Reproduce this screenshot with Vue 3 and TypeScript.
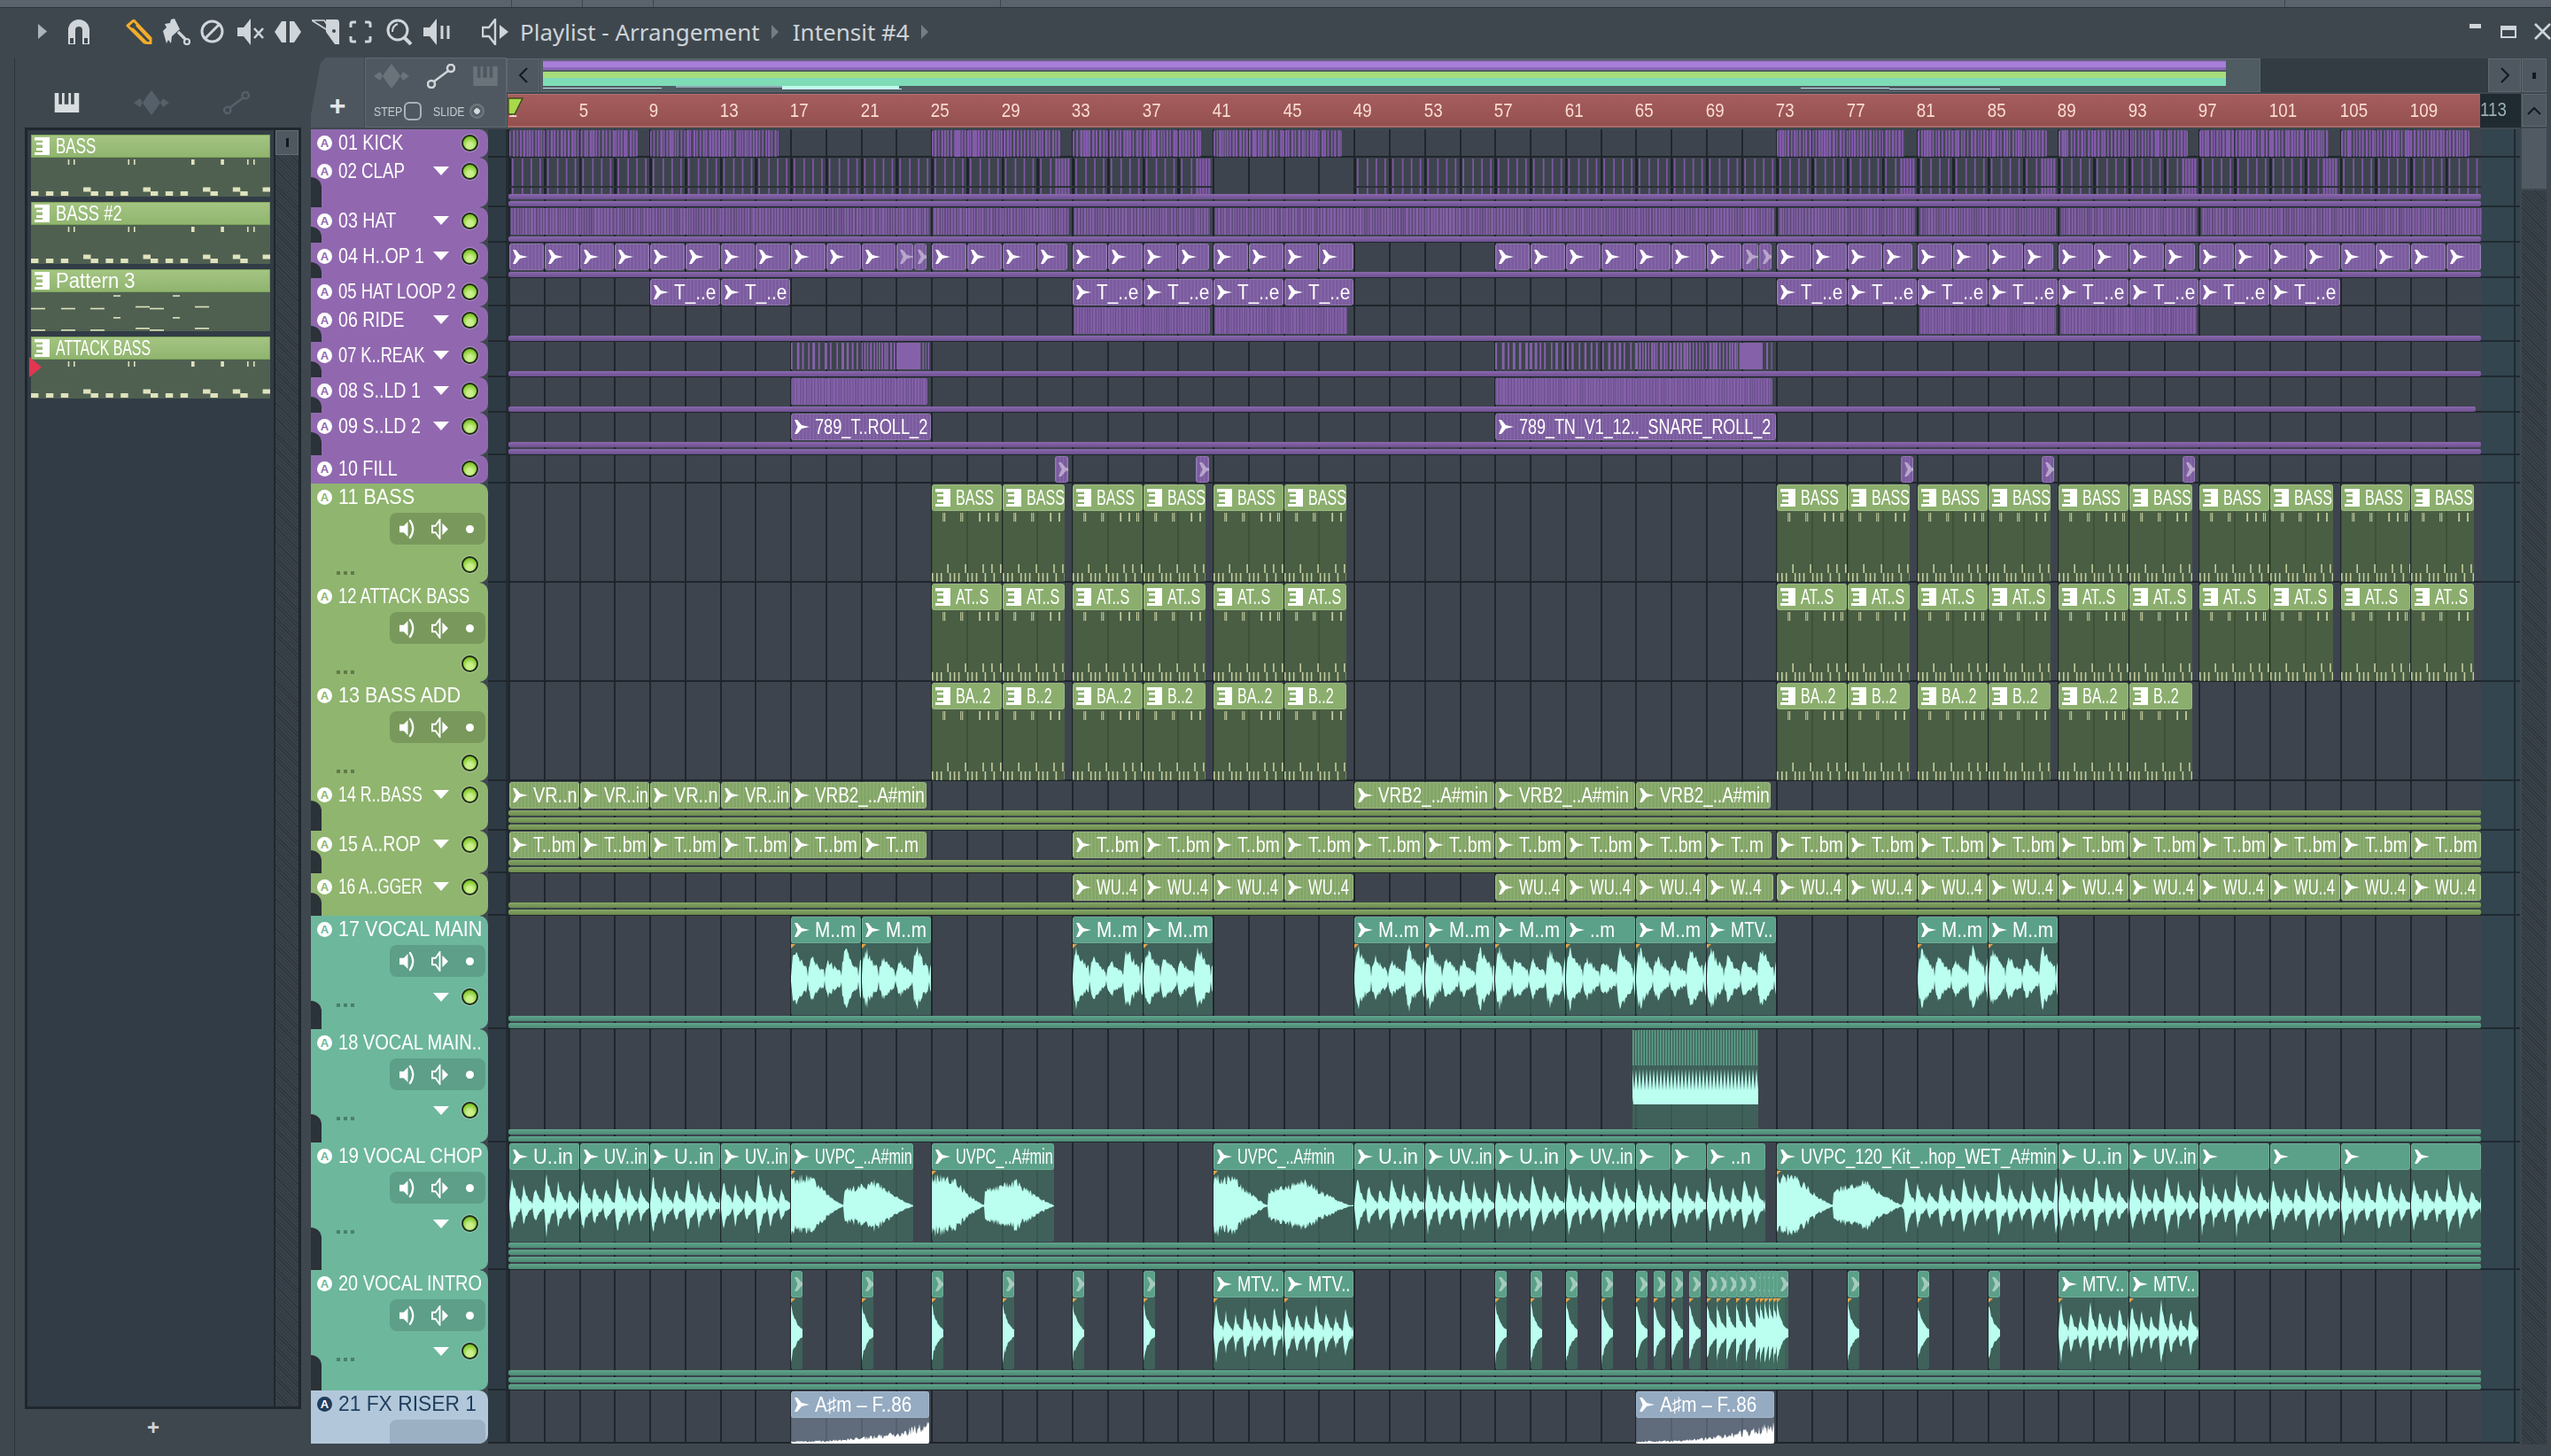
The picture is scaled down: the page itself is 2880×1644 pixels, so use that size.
<template>
  <div class="app">
    <svg class="defs" width="0" height="0">
      <symbol id="ico-audio" viewBox="0 0 17 16">
        <path d="M0 0 L3 0 L8 6 L17 8 L8 10 L3 16 L0 16 L3.5 8 Z" fill="#fff" />
      </symbol>
      <symbol id="ico-pat" viewBox="0 0 17 20">
        <path d="M0 0 H17 V20 H0 V17 H9 V15 H2 V12 H9 V8.5 H2 V6 H9 V3.5 H0 Z" fill="#fff" />
      </symbol>
      <symbol id="ico-wave" viewBox="0 0 40 28">
        <path d="M0 14 L7 9 L10 14 L14 8 L20 0 L26 8 L30 14 L33 9 L40 14 L33 19 L30 14 L26 20 L20 28 L14 20 L10 14 L7 19 Z" fill="currentColor" />
      </symbol>
      <symbol id="ico-line" viewBox="0 0 32 28">
        <circle cx="5" cy="23" r="4" fill="none" stroke="currentColor" stroke-width="2.6" />
        <circle cx="27" cy="5" r="4" fill="none" stroke="currentColor" stroke-width="2.6" />
        <path d="M8 20 L24 8" stroke="currentColor" stroke-width="2.6" />
      </symbol>
      <symbol id="ico-keys" viewBox="0 0 30 24">
        <path d="M0 0 H5 V14 H9 V0 H12 V14 H17 V0 H20 V14 H24 V0 H30 V24 H0 Z" fill="currentColor" />
      </symbol>
      <symbol id="ico-send" viewBox="0 0 20 24">
        <path d="M0 8 H5 L10 3 V21 L5 16 H0 Z" fill="#fff" />
        <path d="M12 1 Q20 12 12 23" fill="none" stroke="#fff" stroke-width="2.4" />
      </symbol>
      <symbol id="ico-spk" viewBox="0 0 20 24">
        <path d="M10 1 V23 L5 16 H1 V8 H5 Z" fill="none" stroke="#fff" stroke-width="2" />
        <path d="M13 5 L20 12 L13 19 Z" fill="#fff" />
      </symbol>
    </svg>

    <div class="topstrip">
      <i class="tick tick-a"></i><i class="tick tick-b"></i><i class="tick tick-c"></i><i class="tick tick-d"></i><i class="tick tick-e"></i>
    </div>

    <header class="toolbar">
      <svg class="ic-play" width="10" height="17" viewBox="0 0 10 17"><path d="M0 0 L10 8.5 L0 17 Z" fill="#aeb5ba" /></svg>
      <svg class="ic-magnet" width="26" height="28" viewBox="0 0 26 28">
        <path d="M1 28 V12 a12 12 0 0 1 24 0 V28 H17 V12 a4 4 0 0 0 -8 0 V28 Z" fill="#cfd5d9" />
        <path d="M3 21 H7 V27 H3 Z M19 21 H23 V27 H19 Z" fill="#3f474e" />
      </svg>
      <div class="tools">
        <span class="tool"><svg width="30" height="28" viewBox="0 0 30 28">
          <path d="M2 7 L9 1 L28 21 L28 27 L21 26 Z M7 10 L23 26 M12 6 L27 22" fill="none" stroke="#f2ad2b" stroke-width="3" stroke-linejoin="round" />
        </svg></span>
        <span class="tool"><svg width="31" height="30" viewBox="0 0 31 30">
          <path d="M0 14 L4 10 L2 6 L8 5 L9 1 L13 0 L19 12 L10 20 L9 28 L6 24 L4 28 Z" fill="#cfd5d9" />
          <path d="M17 15 L26 24" stroke="#cfd5d9" stroke-width="3.4" />
          <circle cx="27" cy="26" r="3" fill="none" stroke="#cfd5d9" stroke-width="2.2" />
        </svg></span>
        <span class="tool"><svg width="27" height="27" viewBox="0 0 27 27">
          <circle cx="13.5" cy="13.5" r="11.5" fill="none" stroke="#cfd5d9" stroke-width="3" />
          <path d="M6 21 L21 6" stroke="#cfd5d9" stroke-width="3" />
        </svg></span>
        <span class="tool"><svg width="30" height="30" viewBox="0 0 30 30">
          <path d="M15 0 V30 L7 20 H0 V10 H7 Z" fill="#cfd5d9" />
          <path d="M19 11 L29 22 M29 11 L19 22" stroke="#cfd5d9" stroke-width="2.6" />
        </svg></span>
        <span class="tool"><svg width="30" height="26" viewBox="0 0 30 26">
          <path d="M0 13 L8 1 L13 1 L13 25 L8 25 Z M30 13 L22 1 L17 1 L17 25 L22 25 Z" fill="#cfd5d9" />
        </svg></span>
        <span class="tool"><svg width="31" height="28" viewBox="0 0 31 28">
          <path d="M0 1 L14 1 L24 16 Z" fill="none" stroke="#cfd5d9" stroke-width="1.6" />
          <path d="M16 0 H28 Q31 0 31 4 V28 H26 L16 14 Z" fill="#cfd5d9" />
          <circle cx="25" cy="13" r="2" fill="#3f474e" />
        </svg></span>
        <span class="tool"><svg width="26" height="26" viewBox="0 0 26 26">
          <path d="M2 8 V4 Q2 2 4 2 H8 M18 2 H22 Q24 2 24 4 V8 M24 18 V22 Q24 24 22 24 H18 M8 24 H4 Q2 24 2 22 V18" fill="none" stroke="#cfd5d9" stroke-width="3" />
        </svg></span>
        <span class="tool"><svg width="30" height="30" viewBox="0 0 30 30">
          <circle cx="13" cy="13" r="11" fill="none" stroke="#cfd5d9" stroke-width="3" />
          <path d="M20 21 L28 29" stroke="#cfd5d9" stroke-width="4" />
          <path d="M7 15 Q7 8 13 6" fill="none" stroke="#cfd5d9" stroke-width="2" />
        </svg></span>
        <span class="tool"><svg width="30" height="30" viewBox="0 0 30 30">
          <path d="M15 0 V30 L7 20 H0 V10 H7 Z" fill="#cfd5d9" />
          <path d="M21 8 V23 M28 8 V23" stroke="#cfd5d9" stroke-width="3" />
        </svg></span>
      </div>
      <svg class="ic-title" width="30" height="30" viewBox="0 0 30 30">
        <path d="M15 1 V29 L8 20 H1 V10 H8 Z" fill="none" stroke="#cfd5d9" stroke-width="2.4" />
        <path d="M20 7 L30 15 L20 23 Z" fill="#cfd5d9" />
      </svg>
      <span class="title">Playlist - Arrangement</span>
      <i class="crumb"></i>
      <span class="title">Intensit #4</span>
      <i class="crumb"></i>
      <div class="winbtns">
        <i class="win-min"></i>
        <i class="win-max"></i>
        <svg width="19" height="19" viewBox="0 0 19 19"><path d="M1 1 L18 18 M18 1 L1 18" stroke="#cfd5d9" stroke-width="2.6" /></svg>
      </div>
    </header>

    <div class="body">
      <aside class="side">
        <div class="side-tabs">
          <svg class="tab-keys" width="31" height="22"><use href="#ico-keys" /></svg>
          <svg class="tab-dim" width="40" height="28"><use href="#ico-wave" /></svg>
          <svg class="tab-dim" width="32" height="26"><use href="#ico-line" /></svg>
        </div>
        <div class="picker">
          <div class="picker-list">
            <div v-for="p in patterns" :key="p.name" class="pat">
              <div class="pat-head">
                <svg width="17" height="20"><use href="#ico-pat" /></svg>
                <span class="squeeze" :style="{ '--sx': p.sx }">{{ p.name }}</span>
              </div>
              <svg class="pat-body" width="270" height="44" viewBox="0 0 270 44">
                <rect v-for="(n, i) in p.notes" :key="i" :x="n.x" :y="n.y" :width="n.w" :height="n.h" fill="#dfe2bd" />
              </svg>
              <i v-if="p.play" class="play-mark"></i>
            </div>
          </div>
          <div class="picker-scroll"><div class="picker-thumb"><i></i></div></div>
        </div>
        <div class="side-foot">+</div>
      </aside>

      <section class="playlist">
        <div class="pl-main">
          <div class="pl-head">
            <div class="add-tab"><span>+</span></div>
            <div class="mode-panel">
              <div class="mode-icons">
                <svg class="dim" width="40" height="28"><use href="#ico-wave" /></svg>
                <svg class="lit" width="32" height="28"><use href="#ico-line" /></svg>
                <svg class="dim" width="30" height="22"><use href="#ico-keys" /></svg>
              </div>
              <div class="mode-row">
                <span class="mode-txt">STEP</span><i class="chk"></i>
                <span class="mode-txt">SLIDE</span><i class="radio"></i>
              </div>
            </div>
            <div class="pl-head-right">
              <div class="ov-row">
                <div class="nav-btn"><svg width="12" height="18" viewBox="0 0 12 18"><path d="M10 1 L2 9 L10 17" fill="none" stroke="#12191e" stroke-width="2" /></svg></div>
                <div class="overview">
                  <svg width="1900" height="36" viewBox="0 0 1900 36">
                    <rect x="0" y="1" width="1900" height="10" fill="#a77fd8" />
                    <rect x="0" y="0" width="1900" height="2" fill="#8a6bb0" opacity=".6" />
                    <rect x="0" y="8" width="1900" height="3" fill="#8c68b8" />
                    <rect x="0" y="13" width="1900" height="7" fill="#a8dc7c" />
                    <rect x="0" y="20" width="1900" height="9" fill="#7edcb6" />
                    <rect x="0" y="31" width="134" height="1" fill="#c8e4f2" />
                    <rect x="150" y="29" width="120" height="2" fill="#8fa9b2" />
                    <rect x="270" y="29" width="132" height="3" fill="#bdfbe9" />
                    <rect x="270" y="32" width="135" height="1" fill="#c8e4f2" />
                    <rect x="1420" y="31" width="100" height="1" fill="#c8e4f2" />
                    <rect x="1520" y="32" width="125" height="1" fill="#c8e4f2" />
                  </svg>
                </div>
                <div class="ov-fill"></div>
                <div class="nav-btn"><svg width="12" height="18" viewBox="0 0 12 18"><path d="M2 1 L10 9 L2 17" fill="none" stroke="#12191e" stroke-width="2" /></svg></div>
              </div>
              <div class="ruler-row">
                <div class="ruler">
                  <span v-for="b in barNumbers" :key="b" class="bar-no" :style="{ left: barX(b) + 'px' }">{{ b }}</span>
                  <svg class="playhead" width="18" height="20" viewBox="0 0 18 20"><path d="M1 1 H17 L8 19 L1 19 Z" fill="#a9d94a" stroke="#3c4a22" stroke-width="1.4" /></svg>
                </div>
                <div class="ruler-end"><span class="bar-end">113</span></div>
              </div>
            </div>
          </div>

          <div v-for="t in tracks" :key="t.name" class="row" :class="'tone-' + t.tone" :style="{ height: t.h + 'px' }">
            <div class="head">
              <div class="head-top">
                <b class="badge">A</b>
                <span class="head-name" :style="{ '--sx': t.sx }">{{ t.name }}</span>
                <template v-if="!t.tall">
                  <i v-if="t.strips" class="tri"></i>
                  <i class="led"></i>
                </template>
              </div>
              <template v-if="t.tall">
                <div class="pill">
                  <template v-if="t.h > 60">
                    <svg width="19" height="23"><use href="#ico-send" /></svg>
                    <svg width="19" height="23"><use href="#ico-spk" /></svg>
                    <i class="pill-dot"></i>
                  </template>
                </div>
                <div class="head-ctl">
                  <span class="dots"><i></i><i></i><i></i></span>
                  <i v-if="t.strips" class="tri"></i>
                  <i class="led"></i>
                </div>
              </template>
              <i v-if="t.strips" class="notch" :class="{ 'notch-tall': t.tall }"></i>
            </div>
            <div class="gutter"></div>
            <div class="lane">
              <div
                v-for="(c, i) in t.clips"
                :key="i"
                class="clip"
                :class="c.cls"
                :style="{ left: c.x + 'px', width: c.w + 'px', height: c.h + 'px' }"
              >
                <svg v-if="c.paths.length" class="clip-art" :width="c.w" :height="c.h">
                  <path v-for="(p, j) in c.paths" :key="j" :d="p.d" :fill="p.fill" :transform="`translate(0 ${p.y})`" />
                </svg>
                <div v-if="c.head" class="clip-head" :class="{ faded: c.faded }">
                  <svg v-if="c.head === 'audio'" class="ic-a" width="17" height="16"><use href="#ico-audio" /></svg>
                  <svg v-else class="ic-p" width="17" height="20"><use href="#ico-pat" /></svg>
                  <span v-if="c.label" class="squeeze" :style="{ '--sx': c.sx }">{{ c.label }}</span>
                </div>
                <i v-if="c.mark" class="mark"></i>
              </div>
              <div v-for="s in t.strips" :key="s" class="strip" :class="{ 'strip-short': t.name === '08 S..LD 1' }"></div>
            </div>
            <div class="tail"></div>
          </div>
        </div>

        <div class="vscroll">
          <div class="vbtn vbtn-top"><i></i></div>
          <div class="vbtn vbtn-up"><svg width="16" height="10" viewBox="0 0 16 10"><path d="M1 9 L8 2 L15 9" fill="none" stroke="#12191e" stroke-width="2" /></svg></div>
          <div class="vthumb"></div>
          <div class="vtrack"></div>
        </div>
      </section>
    </div>
  </div>
</template>

<script setup lang="ts">
interface ArtPath { d: string; fill: string; y: number }
interface Clip {
  x: number
  w: number
  h: number
  cls: string
  head?: 'audio' | 'pat'
  label?: string
  sx?: number
  faded?: boolean
  mark?: boolean
  paths: ArtPath[]
}
interface Track { name: string; tone: string; h: number; strips: number; tall: boolean; sx?: number; clips: Clip[] }

const BAR = 19.88
const barX = (b: number) => (b - 1) * BAR

const barNumbers: number[] = []
for (let b = 1; b <= 109; b += 4) barNumbers.push(b)

function rng(seed: number) {
  let s = seed * 7919 + 17
  return () => {
    s = (s * 16807) % 2147483647
    return s / 2147483647
  }
}

// horizontal squeeze per label, so the text takes the width it has in the clip
const LABEL_SX: Record<string, number> = {
  'VR..n': 0.86,
  'VR..in': 0.8,
  'U..in': 0.95,
  'UV..in': 0.8,
  'T..bm': 0.85,
  'T..m': 0.85,
  'WU..4': 0.72,
  'W..4': 0.75,
  'T_..e': 0.9,
  'M..m': 0.9,
  'MTV..': 0.8,
  'VRB2_..A#min': 0.82,
  'UVPC_..A#min': 0.71,
  '789_T..ROLL_2': 0.79,
  '789_TN_V1_12.._SNARE_ROLL_2': 0.78,
  'UVPC_120_Kit_..hop_WET_A#min': 0.8,
}

// notes of the bass pattern, picker scale (270px = 32 steps)
const step = 270 / 32
const bassNotes: { x: number; y: number; w: number; h: number }[] = []
;[41.7, 48, 109.5, 116, 244, 251].forEach((x) => bassNotes.push({ x, y: 2, w: 1.6, h: 6 }))
;[181, 214.3].forEach((x) => bassNotes.push({ x, y: 2, w: 3.6, h: 6 }))
;[0, 2, 4, 8, 10, 12, 16, 18, 20, 24, 28].forEach((s) => bassNotes.push({ x: s * step, y: 38, w: step, h: 5 }))
;[7, 15, 23, 27, 31].forEach((s) => bassNotes.push({ x: s * step, y: 33.5, w: step, h: 5 }))

const dashNotes: { x: number; y: number; w: number; h: number }[] = []
const dash = (x: number, w: number, y: number) => dashNotes.push({ x, y, w, h: 1.6 })
;[0, 34, 67].forEach((x) => { dash(x, 16, 17.7); dash(x, 16, 42) })
;[93, 160].forEach((x) => { dash(x, 8, 3.3); dash(x, 8, 28) })
dash(118, 16, 15.7); dash(134, 16, 17.7); dash(185, 16, 15.7)
dash(118, 16, 40); dash(134, 16, 42); dash(185, 16, 40)

const patterns = [
  { name: 'BASS', notes: bassNotes, play: false, sx: 0.74 },
  { name: 'BASS #2', notes: bassNotes, play: false, sx: 0.8 },
  { name: 'Pattern 3', notes: dashNotes, play: false, sx: 0.96 },
  { name: 'ATTACK BASS', notes: bassNotes, play: true, sx: 0.69 },
]

// vertical line stripes, for the drum clips
function stripes(w: number, h: number, period: number, width: number, seed: number, y0 = 0) {
  const r = rng(seed)
  let d = ''
  let x = 0
  while (x < w) {
    const bw = width * (0.7 + r() * 0.7)
    d += `M${x.toFixed(1)} ${y0}h${bw.toFixed(1)}v${h}h${(-bw).toFixed(1)}z`
    x += period * (0.75 + r() * 0.5)
  }
  return d
}

const BURST = [0.95, 0.7, 0.6, 1, 0.75, 0.55, 0.85, 0.65]

function chopAmp(x: number, period: number, full = 1) {
  const i = Math.floor(x / period)
  const u = (x % period) / period
  const env = u < 0.25 ? u / 0.25 : Math.exp(-(u - 0.25) * 3.2)
  return Math.min(1, BURST[i % 8] * (0.1 + 0.9 * Math.pow(env, full)) * 1.05)
}

function swellAmp(x: number, s1: number, s2: number) {
  if (x < s1) return x < 22 ? 0.92 : 0.02 + 0.9 * Math.pow(1 - (x - 22) / (s1 - 22), 1.3)
  const u = Math.min(1, (x - s1) / s2)
  if (u < 0.45) return 0.5 + (0.28 * u) / 0.45
  return 0.02 + 0.76 * Math.pow(1 - (u - 0.45) / 0.55, 1.2)
}

function wave(w: number, h: number, amp: (x: number) => number, seed: number, rough = 0.35) {
  const r = rng(seed)
  const mid = h / 2
  const top: string[] = []
  const bot: string[] = []
  for (let x = 0; x <= w; x += 1) {
    const a = amp(x)
    const v = (1 - rough + rough * r()) * a * mid
    top.push(`${x} ${(mid - v).toFixed(1)}`)
    bot.unshift(`${x} ${(mid + v * (0.85 + r() * 0.15)).toFixed(1)}`)
  }
  return 'M' + top.concat(bot).join('L') + 'Z'
}

function riser(w: number, h: number, seed: number) {
  const r = rng(seed)
  let d = `M0 ${h}`
  for (let x = 0; x <= w; x += 1) {
    const a = (0.12 + 0.88 * Math.pow(x / w, 2.4)) * (0.45 + r() * 0.55)
    d += `L${x} ${(h - a * h).toFixed(1)}`
  }
  return d + `L${w} ${h}Z`
}

const clipAt = (bar: number, len: number, h: number, cls: string, extra: Partial<Clip> = {}): Clip => ({
  x: barX(bar) + 1,
  w: len * BAR - 1,
  h,
  cls,
  paths: [],
  sx: extra.label ? LABEL_SX[extra.label] ?? 0.88 : undefined,
  ...extra,
})

// drum rows
function lineClip(bar: number, len: number, h: number, cls: string, period: number, width: number, fill: string, seed: number) {
  const w = len * BAR
  return clipAt(bar, len, h, cls, { paths: [{ d: stripes(w, h, period, width, seed), fill, y: 0 }] })
}

function label(bar: number, len: number, text: string | undefined, cls = 'clip-tex', faded = false) {
  return clipAt(bar, len, 30, cls, { head: 'audio', label: text, faded })
}

function each(start: number, n: number, stepBars: number, make: (bar: number, i: number) => Clip) {
  const out: Clip[] = []
  for (let i = 0; i < n; i++) out.push(make(start + i * stepBars, i))
  return out
}

function clapRange(from: number, to: number) {
  const w = (to - from) * BAR
  let d = ''
  let grid = ''
  for (let b = from; b < to; b += 2) {
    const x0 = (b - from) * BAR
    ;[3, 14, 24, 34].forEach((o) => {
      if (x0 + o < w) {
        d += `M${(x0 + o).toFixed(1)} 0h1.7v31h-1.7zM${(x0 + o).toFixed(1)} 33h1.7v7h-1.7z`
      }
    })
    grid += `M${x0.toFixed(1)} 0h2v40h-2z`
  }
  ;[32, 40, 80, 88, 96, 104].forEach((b) => {
    if (b >= from && b < to) {
      const x0 = (b - from) * BAR
      for (let k = 0; k < 5; k++) d += `M${(x0 + k * 3.4).toFixed(1)} 0h2.6v31h-2.6zM${(x0 + k * 3.4).toFixed(1)} 33h2.6v7h-2.6z`
    }
  })
  return clipAt(from, to - from, 40, 'clip-bare', {
    paths: [
      { d: grid, fill: '#1c2329', y: 0 },
      { d, fill: '#7f58a5', y: 0 },
      { d: `M0 31h${w.toFixed(0)}v2h-${w.toFixed(0)}z`, fill: '#2a3137', y: 0 },
    ],
  })
}

// two-speed roll used on track 07
function rollClip(bar: number, parts: [number, number, number][], seed: number) {
  const total = parts.reduce((a, p) => a + p[0], 0)
  const h = 30
  let d = ''
  let offs = 0
  parts.forEach((p, i) => {
    const w = p[0] * BAR
    if (p[1] === 0) {
      d += `M${offs.toFixed(1)} 0h${w.toFixed(1)}v${h}h-${w.toFixed(1)}z`
    } else {
      const sub = stripes(w, h, p[1], p[2], seed + i)
      d += sub.replace(/M([\d.]+) /g, (_, v) => `M${(parseFloat(v) + offs).toFixed(1)} `)
    }
    offs += w
  })
  return clipAt(bar, total, h, 'clip-bare', { paths: [{ d, fill: '#8561a9', y: 0 }] })
}

const KICK_STARTS = [1, 9, 25, 33, 41, 73, 81, 89, 97, 105]
const hatRanges: [number, number][] = [[1, 23.9], [25, 7.8], [33, 7.8], [41, 31.8], [73, 7.8], [81, 7.8], [89, 7.8], [97, 16]]

const hop = (start: number, n: number, lastLen = 2) =>
  each(start, n, 2, (b, i) => label(b, i === n - 1 ? lastLen : 2, undefined))

const t4Clips: Clip[] = [
  ...hop(1, 11),
  label(23, 1, undefined, 'clip-tex', true),
  label(24, 0.72, undefined, 'clip-tex', true),
  ...hop(25, 4, 1.75),
  ...hop(33, 4, 1.8),
  ...hop(41, 4, 2),
  ...hop(57, 7),
  label(71, 1, undefined, 'clip-tex', true),
  label(72, 0.72, undefined, 'clip-tex', true),
  ...hop(73, 4, 1.75),
  ...hop(81, 4, 1.75),
  ...hop(89, 4, 1.75),
  ...hop(97, 8),
]

const T5_STARTS = [9, 13, 33, 37, 41, 45, 73, 77, 81, 85, 89, 93, 97, 101]

function patClip(bar: number, len: number, text: string) {
  const sc = (4 * BAR) / 270
  let d = ''
  bassNotes.forEach((n) => {
    const isTick = n.y < 10
    const y = isTick ? 32 : n.y < 36 ? 90 : 100
    const nw = isTick ? (n.w > 2 ? 1.8 : 1.1) : 1.6
    d += `M${(n.x * sc).toFixed(1)} ${y}h${nw}v10h-${nw}z`
  })
  return clipAt(bar, len, 110, 'clip-pat', {
    head: 'pat',
    label: text,
    sx: 0.7,
    paths: [{ d, fill: '#c4cb9f', y: 0 }],
  })
}

const PAT_BARS = [25, 33, 41, 73, 81, 89, 97, 105]
const patRow = (names: [string, string], bars: number[]) =>
  bars.flatMap((b) => [patClip(b, 4, names[0]), patClip(b + 4, 3.6, names[1])])

const vrb = (b: number, len = 8) => label(b, len, 'VRB2_..A#min')

function audio(bar: number, len: number, text: string | undefined, bodyH: number, amp: (x: number) => number, seed: number, mark = true, rough = 0.35, faded = false) {
  const w = Math.round(len * BAR)
  return clipAt(bar, len, 30 + bodyH, 'clip-audio', {
    head: 'audio',
    label: text,
    mark,
    faded,
    paths: [{ d: wave(w, bodyH - 2, amp, seed, rough), fill: '#baffef', y: 31 }],
  })
}

// the main vocal is fuller than the chops
const mainAmp = (x: number) => chopAmp(x, 19, 0.5)
const chop13 = (x: number) => chopAmp(x, 13)
const t17 = (bar: number, text: string, seed: number) => audio(bar, 4, text, 81, mainAmp, seed)
const t19chop = (bar: number, text: string | undefined, seed: number, len = 4) => audio(bar, len, text, 81, chop13, seed, false)
const hitAmp = (w: number) => (x: number) => (x > w ? 0 : 0.92 * Math.exp(-x / (w * 0.42)) + 0.02)
const hit = (bar: number, w: number, seed: number) => {
  const px = Math.round(w)
  return clipAt(bar, px / BAR, 111, 'clip-audio', {
    head: 'audio',
    faded: true,
    mark: true,
    paths: [{ d: wave(px, 79, hitAmp(px), seed, 0.2), fill: '#baffef', y: 31 }],
  })
}

const HIT_BARS = [17, 21, 25, 29, 33, 37, 57, 59, 61, 63, 65, 66, 67, 68, 69, 69.55, 70.1, 70.65, 71.2, 71.75, 72.05, 72.3, 72.55, 72.8, 73, 77, 81, 85]

function comb18() {
  const w = 143
  let top = ''
  for (let x = 0; x < w; x += 3.1) top += `M${x.toFixed(1)} 0h1.6v40h-1.6z`
  let d = 'M0 76'
  for (let x = 0; x <= w; x += 2) {
    d += `L${x} ${x % 4 === 0 ? 44 : 68}`
  }
  for (let x = w; x >= 0; x -= 2) {
    d += `L${x} ${x % 4 === 0 ? 108 : 84}`
  }
  return clipAt(64.8, 7.2, 111, 'clip-bare clip-darkteal', {
    paths: [
      { d: top, fill: '#5fa28b', y: 0 },
      { d: d + 'Z', fill: '#baffef', y: 0 },
    ],
  })
}

const fxClip = (bar: number, seed: number) =>
  clipAt(bar, 7.9, 59, 'clip-audio clip-fx', {
    head: 'audio',
    label: 'A♯m – F..86',
    sx: 0.9,
    paths: [{ d: riser(Math.round(7.9 * BAR), 27, seed), fill: '#fff', y: 32 }],
  })

const tracks: Track[] = [
  {
    name: '01 KICK', tone: 'purple', h: 32, strips: 0, tall: false,
    clips: KICK_STARTS.map((b, i) => lineClip(b, 7.35, 30, 'clip-dim', 3.5, 2, '#835bab', i + 1)),
  },
  {
    name: '02 CLAP', tone: 'purple', h: 56, strips: 2, tall: false, sx: 0.78,
    clips: [clapRange(1, 41), clapRange(49, 113)],
  },
  {
    name: '03 HAT', tone: 'purple', h: 40, strips: 1, tall: false,
    clips: hatRanges.map(([b, l], i) => lineClip(b + 0.06, l, 30, 'clip-fill', 3.2, 1.4, '#5d4b78', i + 20)),
  },
  { name: '04 H..OP 1', tone: 'purple', h: 40, strips: 1, tall: false, clips: t4Clips },
  { name: '05 HAT LOOP 2', tone: 'purple', h: 32, strips: 0, tall: false, sx: 0.77, clips: T5_STARTS.map((b) => label(b, 4, 'T_..e')) },
  {
    name: '06 RIDE', tone: 'purple', h: 40, strips: 1, tall: false,
    clips: [[33, 7.8], [41, 7.6], [81, 7.8], [89, 7.8]].map(([b, l], i) => lineClip(b + 0.06, l, 30, 'clip-fill', 3.1, 1.3, '#684f8a', i + 40)),
  },
  {
    name: '07 K..REAK', tone: 'purple', h: 40, strips: 1, tall: false, sx: 0.76,
    clips: [
      rollClip(17, [[4, 6.4, 2.2], [2.1, 3.4, 1.9], [1.2, 0, 0], [0.6, 3.2, 1.4]], 50),
      rollClip(57, [[8, 6.4, 2.2], [5.9, 3.4, 2], [1.2, 0, 0], [0.7, 5, 1.6]], 55),
    ],
  },
  {
    name: '08 S..LD 1', tone: 'purple', h: 40, strips: 1, tall: false,
    clips: [lineClip(17, 7.8, 30, 'clip-fill', 3.2, 1.2, '#6a518d', 60), lineClip(57, 15.8, 30, 'clip-fill', 3.2, 1.2, '#6a518d', 61)],
  },
  {
    name: '09 S..LD 2', tone: 'purple', h: 48, strips: 2, tall: false,
    clips: [label(17, 8, '789_T..ROLL_2'), label(57, 16, '789_TN_V1_12.._SNARE_ROLL_2')],
  },
  {
    name: '10 FILL', tone: 'purple', h: 32, strips: 0, tall: false,
    clips: [32, 40, 80, 88, 96].map((b) => label(b, 0.8, undefined, 'clip-tex', true)),
  },
  { name: '11 BASS', tone: 'green', h: 112, strips: 0, tall: true, sx: 0.9, clips: patRow(['BASS', 'BASS'], PAT_BARS) },
  { name: '12 ATTACK BASS', tone: 'green', h: 112, strips: 0, tall: true, sx: 0.765, clips: patRow(['AT..S', 'AT..S'], PAT_BARS) },
  { name: '13 BASS ADD', tone: 'green', h: 112, strips: 0, tall: true, sx: 0.9, clips: patRow(['BA..2', 'B..2'], [25, 33, 41, 73, 81, 89]) },
  {
    name: '14 R..BASS', tone: 'green', h: 56, strips: 3, tall: false, sx: 0.74,
    clips: [
      label(1, 4, 'VR..n'), label(5, 4, 'VR..in'), label(9, 4, 'VR..n'), label(13, 4, 'VR..in'),
      vrb(17, 7.75), vrb(49), vrb(57), vrb(65, 7.7),
    ],
  },
  {
    name: '15 A..ROP', tone: 'green', h: 48, strips: 2, tall: false,
    clips: [
      ...each(1, 5, 4, (b) => label(b, 4, 'T..bm')),
      label(21, 3.75, 'T..m'),
      ...each(33, 9, 4, (b) => label(b, 4, 'T..bm')),
      label(69, 3.75, 'T..m'),
      ...each(73, 10, 4, (b) => label(b, 4, 'T..bm')),
    ],
  },
  {
    name: '16 A..GGER', tone: 'green', h: 48, strips: 2, tall: false, sx: 0.72,
    clips: [
      ...each(33, 4, 4, (b) => label(b, 4, 'WU..4')),
      ...each(57, 3, 4, (b) => label(b, 4, 'WU..4')),
      label(69, 3.85, 'W..4'),
      ...each(73, 10, 4, (b) => label(b, 4, 'WU..4')),
    ],
  },
  {
    name: '17 VOCAL MAIN', tone: 'teal', h: 128, strips: 2, tall: true, sx: 0.9,
    clips: [
      t17(17, 'M..m', 71), t17(21, 'M..m', 72), t17(33, 'M..m', 73), t17(37, 'M..m', 74),
      t17(49, 'M..m', 75), t17(53, 'M..m', 76), t17(57, 'M..m', 77), t17(61, '..m', 78),
      t17(65, 'M..m', 79), t17(69, 'MTV..', 80), t17(81, 'M..m', 81), t17(85, 'M..m', 82),
    ],
  },
  { name: '18 VOCAL MAIN..', tone: 'teal', h: 128, strips: 2, tall: true, sx: 0.835, clips: [comb18()] },
  {
    name: '19 VOCAL CHOP', tone: 'teal', h: 144, strips: 4, tall: true, sx: 0.857,
    clips: [
      t19chop(1, 'U..in', 91), t19chop(5, 'UV..in', 92), t19chop(9, 'U..in', 93), t19chop(13, 'UV..in', 94),
      audio(17, 7, 'UVPC_..A#min', 81, (x) => swellAmp(x, 60, 78), 95),
      audio(25, 7, 'UVPC_..A#min', 81, (x) => swellAmp(x, 60, 78), 96),
      audio(41, 8, 'UVPC_..A#min', 81, (x) => swellAmp(x, 62, 92), 97),
      t19chop(49, 'U..in', 98), t19chop(53, 'UV..in', 99), t19chop(57, 'U..in', 100), t19chop(61, 'UV..in', 101),
      t19chop(65, undefined, 102, 2), t19chop(67, undefined, 103, 2), t19chop(69, '..n', 104, 3.4),
      audio(73, 16, 'UVPC_120_Kit_..hop_WET_A#min', 81, (x) => (x < 142 ? swellAmp(x, 64, 78) : chop13(x)), 105),
      t19chop(89, 'U..in', 106), t19chop(93, 'UV..in', 107),
      t19chop(97, undefined, 108), t19chop(101, undefined, 109), t19chop(105, undefined, 110), t19chop(109, undefined, 111),
    ],
  },
  {
    name: '20 VOCAL INTRO', tone: 'teal', h: 136, strips: 3, tall: true, sx: 0.83,
    clips: [
      ...HIT_BARS.map((b, i) => hit(b, 14, 120 + i)),
      audio(41, 4, 'MTV..', 81, (x) => chopAmp(x, 11), 150),
      audio(45, 4, 'MTV..', 81, (x) => chopAmp(x, 11), 151),
      audio(89, 4, 'MTV..', 81, (x) => chopAmp(x, 11), 152),
      audio(93, 4, 'MTV..', 81, (x) => chopAmp(x, 11), 153),
    ],
  },
  { name: '21 FX RISER 1', tone: 'blue', h: 60, strips: 0, tall: true, sx: 0.95, clips: [fxClip(17, 170), fxClip(65, 171)] },
]
</script>

<style>
html, body { background: #3f474e; overflow: hidden; }
</style>

<style scoped>
.app {
  width: 2880px;
  height: 1644px;
  overflow: hidden;
  background: #3f474e;
  color: #fff;
  font-family: "Liberation Sans", sans-serif;
  display: flex;
  flex-direction: column;
}
.defs { position: absolute; }
i { display: block; font-style: normal; }

.topstrip {
  height: 8px;
  background: #5a636b;
  border-bottom: 1px solid #2c3339;
  position: relative;
  flex: none;
}
.tick { position: absolute; top: 0; width: 1px; height: 8px; background: #3e464d; }
.tick-a { left: 577px; }
.tick-b { left: 657px; }
.tick-c { left: 737px; }
.tick-d { left: 1129px; }
.tick-e { left: 2579px; }

.toolbar {
  height: 56px;
  flex: none;
  display: flex;
  align-items: center;
  padding-left: 43px;
  padding-bottom: 3px;
  box-sizing: border-box;
}
.ic-magnet { margin-left: 23px; }
.tools { display: flex; margin-left: 40px; }
.tool { width: 42px; display: flex; align-items: center; }
.ic-title { margin-left: 24px; }
.title {
  font-family: "Noto Sans", sans-serif;
  font-size: 26px;
  color: #cdd4d9;
  margin-left: 13px;
}
.crumb {
  width: 0;
  height: 0;
  border-left: 8px solid #757d83;
  border-top: 8px solid transparent;
  border-bottom: 8px solid transparent;
  margin-left: 13px;
}
.crumb + .title { margin-left: 16px; }
.winbtns { margin-left: auto; display: flex; align-items: center; }
.win-min { width: 13px; height: 5px; background: #cfd5d9; margin-right: 22px; margin-top: -12px; }
.win-max { width: 18px; height: 14px; border: 2px solid #cfd5d9; border-top-width: 5px; box-sizing: border-box; margin-right: 20px; }

.body { flex: 1; display: flex; min-height: 0; }

.squeeze {
  display: inline-block;
  flex: none;
  transform: scaleX(var(--sx, 0.82));
  transform-origin: 0 50%;
  width: 0;
  white-space: nowrap;
}

/* pattern picker */
.side {
  width: 335px;
  flex: none;
  box-sizing: border-box;
  border-left: 1px solid #2c3339;
  margin-left: 16px;
  padding-left: 11px;
  display: flex;
  flex-direction: column;
}
.side-tabs {
  height: 79px;
  flex: none;
  box-sizing: border-box;
  display: flex;
  align-items: center;
  padding: 22px 0 0 32px;
  gap: 60px;
  color: #d8dde0;
}
.tab-dim { color: #56606a; }
.picker {
  width: 312px;
  height: 1447px;
  flex: none;
  box-sizing: border-box;
  border: 3px solid #1f272d;
  background: #323c46;
  display: flex;
}
.picker-list { flex: 1; padding: 5px 4px; box-sizing: border-box; }
.pat { position: relative; width: 270px; height: 70px; margin-bottom: 6px; background: #4f6051; }
.pat-head {
  height: 26px;
  box-sizing: border-box;
  border: 1px solid #7da35a;
  background: linear-gradient(#a4c482, #90b56f);
  display: flex;
  align-items: center;
  padding-left: 3px;
  font-size: 23px;
  gap: 7px;
}
.pat-body { display: block; }
.play-mark {
  position: absolute;
  left: -2px;
  top: 23px;
  width: 14px;
  height: 23px;
  background: #e23652;
  clip-path: polygon(0 0, 100% 50%, 0 100%);
}
.picker-scroll {
  width: 29px;
  border-left: 2px solid #1f272d;
  background: repeating-linear-gradient(45deg, #2f363c 0 1px, #39414a 1px 3px);
}
.picker-thumb {
  height: 28px;
  background: #4f5860;
  border: 1px solid #646d74;
  box-sizing: border-box;
  display: flex;
  align-items: center;
  justify-content: center;
}
.picker-thumb i { width: 3px; height: 10px; background: #12191e; }
.side-foot {
  text-align: center;
  font-weight: 700;
  font-size: 24px;
  line-height: 42px;
  color: #cfd5d9;
  width: 290px;
}

/* playlist */
.playlist { flex: 1; display: flex; min-width: 0; }
.pl-main { width: 2495px; flex: none; }
.pl-head { height: 81px; display: flex; }
.add-tab {
  width: 60px;
  height: 79px;
  background: #4d565e;
  clip-path: polygon(0 100%, 0 82%, 18% 8%, 28% 0, 100% 0, 100% 100%);
  display: flex;
  align-items: flex-end;
  justify-content: center;
  font-weight: 700;
  font-size: 32px;
  line-height: 50px;
  color: #e4e8ea;
}
.mode-panel {
  width: 160px;
  height: 79px;
  margin-left: 1px;
  box-sizing: border-box;
  background: #4f5860;
  border: 1px solid #5f686f;
  font-size: 15px;
  color: #c4cbd0;
  padding: 6px 8px 0 9px;
}
.mode-icons { display: flex; justify-content: space-between; align-items: center; height: 28px; }
.dim { color: #6a737a; }
.lit { color: #cfd5d9; }
.mode-row { display: flex; align-items: center; margin-top: 15px; }
.mode-txt { display: inline-block; width: 32px; transform: scaleX(0.82); transform-origin: 0 50%; white-space: nowrap; }
.chk { width: 20px; height: 21px; border: 2px solid #aab2b7; border-radius: 6px; box-sizing: border-box; margin: 0 13px 0 2px; }
.radio {
  width: 17px;
  height: 17px;
  margin-left: 9px;
  border-radius: 50%;
  border: 2px solid #6f787f;
  box-sizing: border-box;
  background: radial-gradient(circle, #d2d8dc 0 3px, #59626a 3.5px);
}
.pl-head-right { flex: 1; min-width: 0; }
.ov-row { display: flex; height: 38px; margin-top: 1px; }
.nav-btn {
  width: 37px;
  flex: none;
  box-sizing: border-box;
  background: #4f5860;
  border: 1px solid #5f686f;
  display: flex;
  align-items: center;
  justify-content: center;
}
.overview {
  width: 1942px;
  flex: none;
  box-sizing: border-box;
  background: #4f5c62;
  border: 1px solid #5f686f;
  padding: 1px 1px 0 2px;
  margin-left: 1px;
}
.overview svg { display: block; }
.ov-fill { flex: 1; background: #333b43; }
.ruler-row { display: flex; height: 38px; margin-top: 2px; }
.ruler {
  position: relative;
  width: 2227px;
  margin-left: 1px;
  flex: none;
  background: linear-gradient(#a65d5e, #94504f);
  border-top: 1px solid #b07070;
  border-bottom: 2px solid #a86a68;
  box-sizing: border-box;
  overflow: hidden;
}
.bar-no, .bar-end {
  font-size: 22px;
  line-height: 36px;
  color: #fbdcd2;
  display: inline-block;
  transform: scaleX(0.85);
  transform-origin: 0 50%;
  white-space: nowrap;
}
.bar-no { position: absolute; top: 0; padding-left: 1px; }
.playhead { position: absolute; left: 0; top: 3px; }
.ruler-end { flex: 1; background: #1f2a31; overflow: hidden; }
.bar-end { color: #9db0b8; }

.row { display: flex; overflow: hidden; }
.tone-purple { --head: #9168af; --c-head: #8261a6; --strip-a: #8a69ad; --strip-b: #6e5091; --txt: #fff; --pill: #7f5a9a; }
.tone-green { --head: #90b56f; --c-head: #8bae6e; --c-body: rgba(82, 112, 62, 0.6); --strip-a: #86a765; --strip-b: #6b8a4f; --txt: #fff; --pill: #79995c; }
.tone-teal { --head: #6db79d; --c-head: #5ba088; --c-body: rgba(64, 110, 96, 0.7); --strip-a: #5fa58c; --strip-b: #4c8873; --txt: #fff; --pill: #5d9f88; }
.tone-blue { --head: #b2c8da; --c-head: #95abc1; --c-body: rgba(120, 135, 155, 0.6); --strip-a: #95abc1; --strip-b: #7d92a7; --txt: #1f3d5c; --pill: #9bb0c3; }

.head {
  position: relative;
  width: 200px;
  flex: none;
  box-sizing: border-box;
  background: var(--head);
  border-radius: 0 10px 10px 0;
  color: var(--txt);
  overflow: hidden;
}
.head-top {
  height: 30px;
  display: flex;
  align-items: center;
  padding: 0 11px 0 7px;
}
.badge {
  width: 17px;
  height: 17px;
  flex: none;
  border-radius: 50%;
  background: #fff;
  color: var(--head);
  font: 700 13px/17px "Liberation Sans", sans-serif;
  text-align: center;
}
.tone-blue .badge { background: #1f3d5c; color: #fff; }
.head-name {
  margin-left: 7px;
  flex: 1;
  min-width: 0;
  width: 0;
  font-size: 24px;
  white-space: nowrap;
  transform: scaleX(var(--sx, 0.82));
  transform-origin: 0 50%;
}
.tri {
  width: 0;
  height: 0;
  flex: none;
  margin-left: auto;
  margin-right: 14px;
  border-top: 10px solid #fff;
  border-left: 9px solid transparent;
  border-right: 9px solid transparent;
}
.led {
  width: 19px;
  height: 19px;
  flex: none;
  box-sizing: border-box;
  margin-left: auto;
  border-radius: 50%;
  border: 2px solid #22301a;
  box-shadow: 0 0 0 1px rgba(255, 255, 255, 0.28);
  background: radial-gradient(circle at 50% 70%, #c9f08a 0 25%, #86c92e 70%, #5a9a18);
}
.tri + .led { margin-left: 0; }
.pill {
  width: 108px;
  height: 36px;
  margin: 3px 3px 0 auto;
  background: var(--pill);
  border-radius: 8px;
  display: flex;
  align-items: center;
  padding-left: 11px;
  box-sizing: border-box;
  gap: 17px;
}
.pill-dot { width: 9px; height: 9px; margin-left: 3px; background: #fff; border-radius: 50%; }
.head-ctl {
  display: flex;
  align-items: center;
  padding: 0 11px 0 29px;
  margin-top: 13px;
  height: 19px;
}
.dots { display: flex; gap: 4px; margin-top: 19px; }
.dots i { width: 4px; height: 4px; background: var(--pill); }
.tone-green .dots i, .tone-teal .dots i { filter: brightness(0.8); }
.notch {
  position: absolute;
  left: 0;
  top: 22px;
  bottom: 0;
  width: 12px;
  background: #2b3238;
  border-top-right-radius: 12px;
}
.notch-tall { top: 96px; }

.gutter {
  width: 23px;
  flex: none;
  background: #2f3b44;
  box-shadow: inset 0 -2px #1f272d, inset -3px 0 #232c33;
}
.lane {
  position: relative;
  width: 2227px;
  flex: none;
  box-sizing: border-box;
  display: flex;
  flex-direction: column;
  justify-content: flex-end;
  gap: 2px;
  padding-bottom: 1px;
  background:
    linear-gradient(#1e252b, #1e252b) bottom / 100% 2px no-repeat,
    repeating-linear-gradient(90deg, #1f262c 0 2px, transparent 2px 39.76px),
    #3d444d;
}
.tail {
  width: 44px;
  flex: none;
  background: #33454f;
  box-shadow: inset 0 -2px #1f2a31, inset -5px 0 #33454f, inset -7px 0 #20292f;
}
.strip {
  position: relative;
  height: 6px;
  flex: none;
  border-radius: 2px;
  background: linear-gradient(var(--strip-a), var(--strip-b));
}
.strip-short { margin-right: 6px; }

.clip { position: absolute; top: 1px; overflow: hidden; border-radius: 2px; }
.clip-art { position: absolute; left: 0; top: 0; }
.clip-head {
  position: relative;
  height: 30px;
  box-sizing: border-box;
  display: flex;
  align-items: center;
  padding-left: 3px;
  background: var(--c-head);
  border-radius: 3px;
  border: 1px solid rgba(255, 255, 255, 0.12);
  white-space: nowrap;
  font-size: 23px;
  color: #fff;
}
.clip-head .squeeze { margin-left: 6px; }
.ic-a, .ic-p { flex: none; }
.faded .ic-a { opacity: 0.45; }
.clip-tex .clip-head {
  background:
    repeating-linear-gradient(90deg, rgba(255, 255, 255, 0.05) 0 1px, rgba(0, 0, 0, 0.05) 1px 4px),
    var(--c-head);
}
.clip-dim { background: rgba(90, 80, 110, 0.25); }
.clip-fill { background: #8561a9; }
.clip-bare { border-radius: 0; }
.clip-darkteal { background: rgba(64, 110, 96, 0.7); }
.clip-pat { background: var(--c-body); }
.clip-audio { background: var(--c-body); }
.mark {
  position: absolute;
  left: 0;
  top: 31px;
  width: 0;
  height: 0;
  border-top: 5px solid #e8a34a;
  border-right: 5px solid transparent;
}

.vscroll { width: 28px; margin-left: 1px; flex: none; display: flex; flex-direction: column; gap: 2px; padding-top: 1px; height: 1566px; box-sizing: border-box; }
.vbtn {
  flex: none;
  background: #4f5860;
  border: 1px solid #5f686f;
  box-sizing: border-box;
  display: flex;
  align-items: center;
  justify-content: center;
}
.vbtn-top { height: 38px; }
.vbtn-top i { width: 4px; height: 7px; background: #12191e; }
.vbtn-up { height: 37px; }
.vthumb { height: 68px; background: #515a62; flex: none; }
.vtrack { flex: 1; background: repeating-linear-gradient(45deg, #2f363c 0 1px, #39414a 1px 3px); }
</style>
